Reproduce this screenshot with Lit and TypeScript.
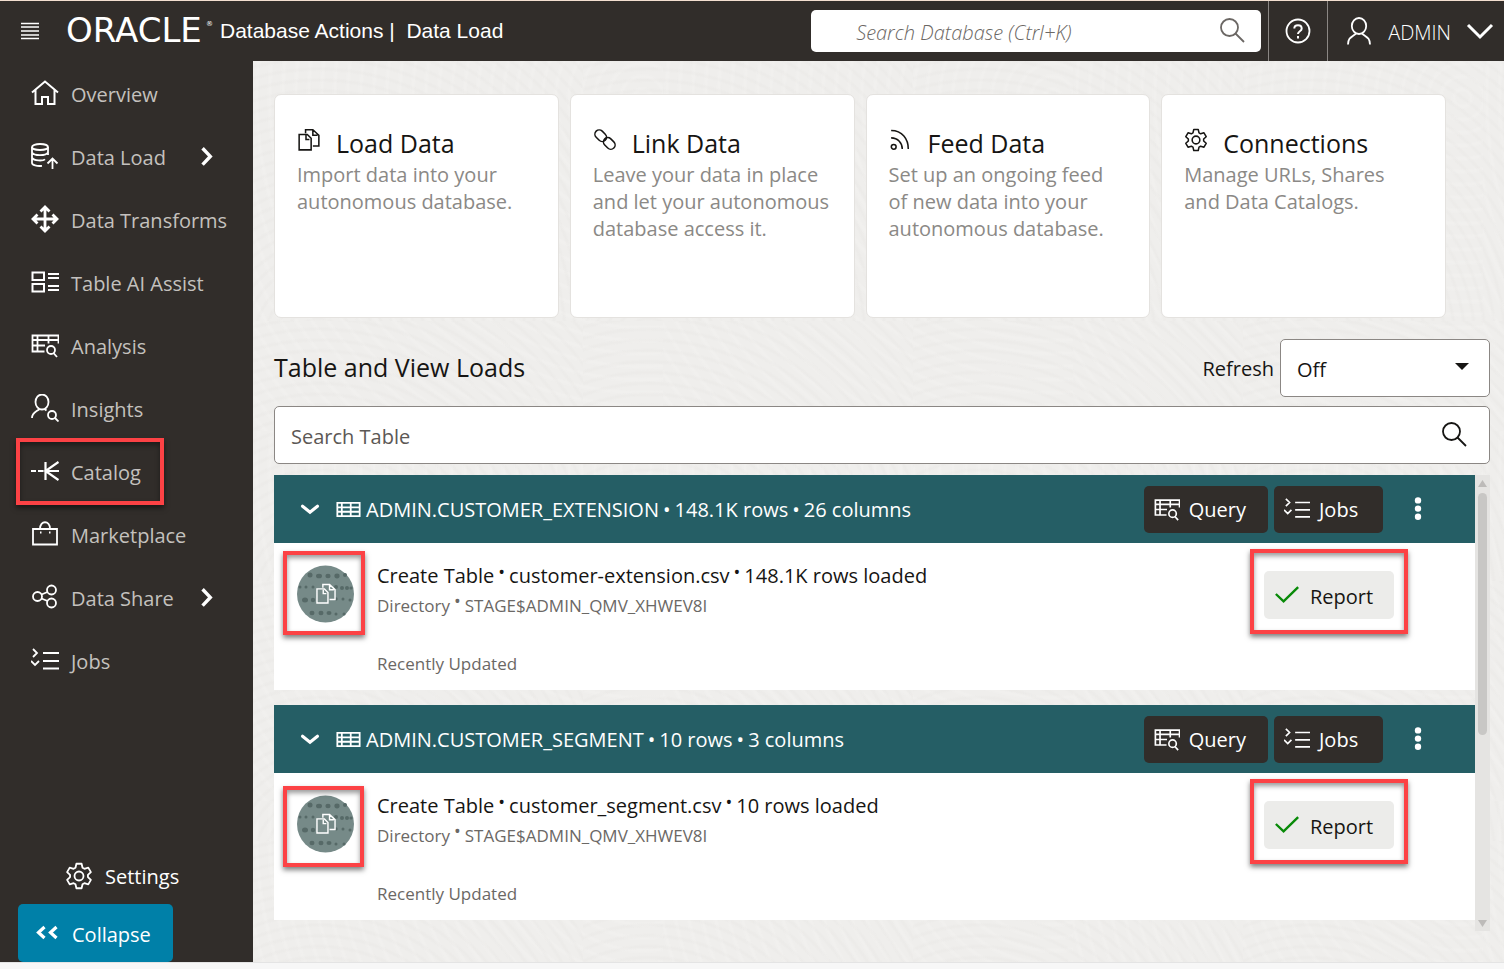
import { LitElement, html, svg, css, nothing } from "lit";
import type { SVGTemplateResult } from "lit";
import { customElement } from "lit/decorators.js";
import { classMap } from "lit/directives/class-map.js";

/** Outline of a gear with six teeth around (14, 14). */
function gearOutline(outer: number, inner: number): string {
  const points: string[] = [];
  const at = (radius: number, degrees: number) => {
    const a = (degrees * Math.PI) / 180;
    points.push(`${(14 + radius * Math.cos(a)).toFixed(2)} ${(14 + radius * Math.sin(a)).toFixed(2)}`);
  };
  for (let i = 0; i < 6; i++) {
    const mid = 90 + i * 60;
    at(inner, mid - 23);
    at(outer, mid - 12);
    at(outer, mid + 12);
    at(inner, mid + 23);
  }
  return `M${points.join("L")}Z`;
}

const GEAR = gearOutline(12.5, 9);

const ICONS: Record<string, SVGTemplateResult> = {
  menu: svg`<path d="M5 6.500h18M5 10h18M5 14h18M5 18h18M5 21.500h18" stroke-width="1.300"/>`,
  home: svg`<path d="M1 13.500 14 2.500l13 11M4.500 11v14H11v-7h6v7h6.500V11" stroke-width="2"/>`,
  load: svg`<ellipse cx="9" cy="5" rx="8" ry="3"/><path d="M1 5v16c0 2 5 3.500 10 2.800M17 5v8M1 10.500c2 3.500 14 3.500 16 0M1 15.800c2 3.300 11 3.300 13 1.500M21.500 27V17M16.500 21.500l5-5 5 5"/>`,
  transforms: svg`<path stroke-width="2.800" d="M14 3v22M3 14h22M9.500 6.500L14 2l4.500 4.500M9.500 21.500L14 26l4.500-4.500M6.500 9.500L2 14l4.500 4.500M21.500 9.500L26 14l-4.500 4.500"/>`,
  assist: svg`<path stroke-width="2" d="M1.500 4.500H13V12H1.500zM1.500 16H13v7.500H1.500zM17 6h11M17 10h11M17 18h11M17 22h11"/>`,
  analysis: svg`<path d="M13.500 20.500H1.500V4.500h26v8M1.500 9h26M6.500 4.500v16M17.500 4.500v8M1.500 14.500H14"/><circle cx="20" cy="19" r="4"/><path d="M22.500 22l3.500 4"/>`,
  insights: svg`<ellipse cx="11" cy="8" rx="6.500" ry="7.500"/><path d="M1 24C1 18.500 5 18 8.500 15M13.500 15l2 1.500"/><circle cx="21" cy="21" r="4"/><path d="M24 24l3.500 3.500"/>`,
  catalog: svg`<path stroke-width="2.200" d="M0 14h5M7 14h5.500M14.500 5v18M14.500 14H28M27.500 5l-13 9 13 9"/>`,
  market: svg`<path d="M2 9h24v15.500H2zM9 9c0-9 10-9 10 0"/><path d="M9 12.500h1.500M18 12.500h1.500" stroke-width="2"/>`,
  share: svg`<circle cx="6.500" cy="13.500" r="4.500"/><circle cx="20.500" cy="7" r="4.500"/><circle cx="20.500" cy="20" r="4.500"/><path d="M10.500 11.500l6-2.500M10.500 15.500l6 2.500"/>`,
  jobs: svg`<path d="M12 7h16M12 15h16M12 22.500h16M2 3l4 4-4 4M0 15l4 4 4-4"/>`,
  gear: svg`<path stroke-linejoin="round" d=${GEAR}/><circle cx="14" cy="14" r="4.500"/>`,
  copy: svg`<path d="M2.500 7.500H12l4.500 4.500v13.500H2.500zM10.500 8.500v5h4M10 6V2h8.500l7 6.500V21H18.500M18.500 3v5.500h5.500"/>`,
  link: svg`<rect x="1.500" y="4" width="15" height="10" rx="5" transform="rotate(45 9 9)"/><rect x="11.500" y="13" width="15" height="10" rx="5" transform="rotate(45 19 18)"/>`,
  feed: svg`<circle cx="5.500" cy="22" r="2.800"/><path d="M2.500 11.500c8 0 13 6 13 13M2.500 3c13 0 20 10 20 21.500"/>`,
  search: svg`<circle cx="11.500" cy="11.500" r="8.500"/><path d="M17.500 17.500l8.500 8.500"/>`,
  help: svg`<circle cx="14" cy="14" r="11.500"/><path d="M10.300 11.500c0-4.500 7.400-4.500 7.400 0 0 3-3.700 2.500-3.700 5.500M14 19v2.500" stroke-width="2"/>`,
  user: svg`<ellipse cx="14" cy="9" rx="7.200" ry="8"/><path d="M3 27.500c0-7 4-7.500 8-11M25 27.500c0-7-4-7.500-8-11"/>`,
  down: svg`<path d="M2 8l12 12 12-12" stroke-width="3"/>`,
  chevron: svg`<path d="M4.500 10.500L14 18l9.500-7.500" stroke-width="4" stroke-linecap="round"/>`,
  next: svg`<path d="M10 5l9 9.500-9 9.500" stroke-width="4"/>`,
  collapse: svg`<path d="M11.500 7l-6 5.500 6 5.500M23.500 7l-6 5.500 6 5.500" stroke-width="3.200"/>`,
  grid: svg`<path d="M1.500 6.500h25v15h-25zM1.500 11.500h25M1.500 16.500h25M6.500 6.500v15M16.500 6.500v15" stroke-width="2"/>`,
  check: svg`<path d="M1 14l9 8.500L27 6" stroke-width="2.800"/>`,
  dots: svg`<g fill="currentColor" stroke="none"><circle cx="14" cy="4" r="3.700"/><circle cx="14" cy="13.500" r="3.700"/><circle cx="14" cy="23" r="3.700"/></g>`,
};

const icon = (name: string, size = "") => html`
  <svg class="icon ${size}" viewBox="0 0 28 28" aria-hidden="true">${ICONS[name]}</svg>
`;

interface NavItem { icon: string; label: string; more?: boolean; marked?: boolean; }
interface Card { icon: string; title: string; lines: string[]; }
interface Load { table: string; rows: string; columns: string; file: string; low?: boolean; }

const NAV: NavItem[] = [
  { icon: "home", label: "Overview" },
  { icon: "load", label: "Data Load", more: true },
  { icon: "transforms", label: "Data Transforms" },
  { icon: "assist", label: "Table AI Assist" },
  { icon: "analysis", label: "Analysis" },
  { icon: "insights", label: "Insights" },
  { icon: "catalog", label: "Catalog", marked: true },
  { icon: "market", label: "Marketplace" },
  { icon: "share", label: "Data Share", more: true },
  { icon: "jobs", label: "Jobs" },
];

const CARDS: Card[] = [
  { icon: "copy", title: "Load Data", lines: ["Import data into your", "autonomous database."] },
  { icon: "link", title: "Link Data", lines: ["Leave your data in place", "and let your autonomous", "database access it."] },
  { icon: "feed", title: "Feed Data", lines: ["Set up an ongoing feed", "of new data into your", "autonomous database."] },
  { icon: "gear", title: "Connections", lines: ["Manage URLs, Shares", "and Data Catalogs."] },
];

const LOADS: Load[] = [
  { table: "ADMIN.CUSTOMER_EXTENSION", rows: "148.1K", columns: "26", file: "customer-extension.csv" },
  { table: "ADMIN.CUSTOMER_SEGMENT", rows: "10", columns: "3", file: "customer_segment.csv", low: true },
];

@customElement("app-root")
export class AppRoot extends LitElement {
  static styles = css`
    :host {
      display: grid;
      grid-template: auto 1fr auto / 253px 1fr;
      min-height: 100vh;
      box-sizing: border-box;
      background: #efeeec;
      color: #161513;
      font: 20px/27px "Open Sans", "Noto Sans", sans-serif;
    }
    *, *::before, *::after { box-sizing: border-box; }
    h1, h2, h3, p, ul { margin: 0; padding: 0; font-weight: 400; }
    ul { list-style: none; }
    a { color: inherit; text-decoration: none; }
    button, input, select { font: inherit; color: inherit; margin: 0; border: 0; background: none; padding: 0; }
    .icon { width: 28px; height: 28px; flex: none; display: block; fill: none; stroke: currentColor; stroke-width: 1.8; }
    .icon.s { width: 22px; height: 22px; }
    .icon.m { width: 24px; height: 24px; }

    .top {
      grid-column: 1 / -1;
      display: flex;
      align-items: center;
      height: 61px;
      border-top: 1px solid #f3dfd0;
      background: #312d2a;
      color: #fff;
    }
    .menu { margin: 0 19px 0 16px; }
    .logo { width: 157px; height: 60px; flex: none; fill: #fff; font-family: "DejaVu Sans", sans-serif; font-size: 34px; }
    .logo .reg { font-size: 7px; }
    .product { font: 21px/30px "Liberation Sans", Arial, sans-serif; white-space: pre; flex: 1; }
    .find { display: flex; align-items: center; width: 450px; height: 42px; margin-right: 7px; padding: 2px 15px 0 45px; border-radius: 5px; background: #fff; color: #6b6764; }
    .find input { flex: 1; min-width: 0; font-style: italic; font-weight: 300; outline: 0; }
    .find .icon { margin-bottom: 4px; }
    input::placeholder { color: inherit; opacity: 1; }
    .help, .user { display: flex; align-items: center; align-self: stretch; border-left: 1px solid #8b8784; }
    .help { justify-content: center; width: 59px; }
    .user { gap: 15px; padding: 2px 10px 0 17px; font-weight: 300; }
    .user .icon { margin-bottom: 2px; }

    .side { display: flex; flex-direction: column; background: #312d2a; color: #fff; padding-top: 2px; }
    .nav a { position: relative; display: flex; align-items: center; gap: 12px; height: 63px; padding-left: 31px; color: #c4c1be; }
    .nav a > .icon { color: #fff; margin-bottom: 4px; }
    .nav .label { white-space: nowrap; }
    .nav .more { position: absolute; left: 194px; top: 18px; }
    .settings { display: flex; align-items: center; gap: 12px; margin-top: auto; padding: 14px 0 14px 65px; }
    .collapse { display: flex; align-items: center; gap: 11px; width: 155px; height: 58px; margin-left: 18px; padding: 2px 0 0 15px; border-radius: 5px; background: #0080a8; }

    .mark { position: absolute; border: 4px solid #fc4245; box-shadow: 0 3px 5px rgba(0,0,0,.5), inset 0 3px 5px rgba(0,0,0,.4); pointer-events: none; }
    .mark.item { left: 16px; width: 148px; top: -3px; bottom: -1px; }
    .mark.round { inset: -14px -11px -12px -14px; }
    .mark.round.low { inset: -9px -10px -14px -14px; }
    .mark.report { inset: -22px -14px -15px -14px; }

    .main {
      min-width: 0;
      padding: 33px 14px 30px 21px;
      background-image:
        repeating-radial-gradient(ellipse at 20% 110%, transparent 0 4px, rgba(90,80,70,.015) 6px 7px, transparent 9px 10px),
        repeating-radial-gradient(circle at 95% 10%, transparent 0 6px, rgba(255,255,255,.12) 8px 9px, transparent 12px 13px);
      background-size: 330px 260px, 410px 370px;
    }
    .cards { display: grid; grid-template-columns: repeat(4, 1fr); gap: 11px; margin-right: 44px; }
    .card { min-height: 224px; padding: 31px 10px 20px 22px; border: 1px solid #e4e2df; border-radius: 7px; background: #fff; color: #8b8986; white-space: nowrap; }
    .card h2 { display: flex; align-items: center; gap: 15px; margin-bottom: 1px; font-size: 25px; line-height: 34px; color: #161513; }
    .card h2 .icon { margin-bottom: 6px; }
    .bar { display: flex; align-items: center; margin: 21px 0 9px; }
    .bar h1 { flex: 1; font-size: 25px; line-height: 34px; padding-bottom: 2px; }
    .field { position: relative; margin-left: 6px; }
    .field select { appearance: none; display: block; width: 210px; height: 58px; padding: 2px 40px 0 16px; border: 1px solid #8b8784; border-radius: 5px; background: #fff; }
    .caret { position: absolute; right: 20px; top: 23px; width: 16px; height: 9px; fill: #161513; }
    .search { display: flex; align-items: center; height: 58px; padding: 0 21px 0 16px; border: 1px solid #8b8784; border-radius: 5px; background: #fff; color: #5c5855; }
    .search input { flex: 1; min-width: 0; height: 54px; padding-top: 2px; outline: 0; }
    .search .icon { color: #161513; margin-bottom: 2px; }

    .results { display: flex; margin-top: 11px; }
    .list { flex: 1; min-width: 0; display: grid; gap: 15px; padding-bottom: 11px; }
    .scroll { display: flex; flex-direction: column; align-items: center; width: 15px; background: #e5e4e2; }
    .scroll svg { width: 9px; height: 18px; fill: #bdbbb9; }
    .thumb { width: 9px; height: 242px; margin-bottom: auto; border-radius: 5px; background: #c8c7c5; }
    .load { background: #fff; }
    .head { display: flex; align-items: center; height: 68px; padding-right: 45px; background: #255e65; color: #fff; }
    .head h3 { flex: 1; display: flex; align-items: center; gap: 5px; font-size: 20px; line-height: 27px; white-space: nowrap; }
    .head h3 .icon { width: 25px; height: 25px; }
    .sep { margin: 0 4px; }
    .toggle { margin: 0 15px 0 25px; }
    .dark { display: flex; align-items: center; gap: 9px; height: 47px; min-width: 109px; margin-right: 6px; padding: 0 22px 0 10px; border-radius: 5px; background: #312d2a; }
    .dark .icon { width: 26px; height: 26px; }
    .dots { margin-left: 17px; }
    .body { display: flex; align-items: flex-start; min-height: 147px; padding: 22px 81px 0 23px; }
    .avatar { position: relative; display: grid; place-items: center; width: 57px; height: 58px; margin-right: 23px; color: #fff; }
    .avatar .icon { position: relative; }
    .avatar .disc { position: absolute; inset: 0; width: 57px; height: 58px; }
    .info { flex: 1; margin-top: -3px; white-space: nowrap; }
    .small { font-size: 17px; line-height: 24px; color: #6b6865; }
    .info .place { margin-top: 4px; margin-bottom: 34px; }
    .dot { margin: 0 4px; vertical-align: 4px; font-size: 18px; line-height: 16px; }
    .body .frame { position: relative; margin-top: 6px; }
    .result { display: flex; align-items: center; gap: 11px; width: 130px; height: 48px; padding: 2px 0 0 11px; border-radius: 5px; background: #ececea; }
    .result .icon { color: #088a08; margin-bottom: 4px; }
    .foot { grid-column: 1 / -1; height: 7px; border-top: 1px solid #e4e4e4; background: #f7f7f7; }
  `;

  private disc() {
    return html`
      <svg class="disc" viewBox="0 0 57 58" aria-hidden="true">
        <circle cx="28.500" cy="29" r="28.500" fill="#768a88"/>
        <g fill="#566967">
          <circle cx="13" cy="10" r="2.500"/><ellipse cx="22" cy="11" rx="3" ry="2.300"/><ellipse cx="31" cy="11" rx="2.600" ry="2.200"/><ellipse cx="40" cy="11" rx="2.600" ry="2.400"/><circle cx="48" cy="10" r="2"/>
          <circle cx="3" cy="22" r="1.500"/><circle cx="9" cy="22" r="1.500"/><circle cx="16" cy="22" r="1.500"/><circle cx="39" cy="22" r="2"/><circle cx="45" cy="23" r="2"/><circle cx="50" cy="23" r="2"/><circle cx="54" cy="23" r="1.600"/>
          <ellipse cx="8" cy="35" rx="3" ry="2.500"/><circle cx="16" cy="35" r="2.200"/><circle cx="39" cy="34" r="1.700"/><circle cx="46" cy="34" r="1.500"/><circle cx="53" cy="35" r="1.500"/>
          <ellipse cx="15" cy="48" rx="2.500" ry="2.200"/><ellipse cx="24" cy="48" rx="2.500" ry="2.200"/><ellipse cx="32" cy="48" rx="2.500" ry="2"/><circle cx="39" cy="49" r="1.500"/><circle cx="47" cy="49" r="1.500"/>
        </g>
      </svg>
    `;
  }

  private load(item: Load) {
    const dot = html`<span class="dot">•</span>`;
    const sep = html`<span class="sep">•</span>`;
    return html`
      <article class="load">
        <header class="head">
          <button class="toggle" aria-label="Toggle ${item.table}">${icon("chevron", "s")}</button>
          <h3>${icon("grid")}<span>${item.table}${sep}${item.rows} rows${sep}${item.columns} columns</span></h3>
          <button class="dark">${icon("analysis")}Query</button>
          <button class="dark">${icon("jobs")}Jobs</button>
          <button class="dots" aria-label="More actions">${icon("dots", "m")}</button>
        </header>
        <div class="body">
          <div class="avatar">
            ${this.disc()}${icon("copy", "s")}
            <span class=${classMap({ mark: true, round: true, low: !!item.low })}></span>
          </div>
          <div class="info">
            <p>Create Table${dot}${item.file}${dot}${item.rows} rows loaded</p>
            <p class="small place">Directory${dot}STAGE$ADMIN_QMV_XHWEV8I</p>
            <p class="small">Recently Updated</p>
          </div>
          <div class="frame">
            <button class="result">${icon("check", "m")}Report</button>
            <span class="mark report"></span>
          </div>
        </div>
      </article>
    `;
  }

  render() {
    return html`
      <header class="top">
        <button class="menu" aria-label="Menu">${icon("menu")}</button>
        <svg class="logo" viewBox="0 0 157 60" role="img" aria-label="Oracle">
          <text x="3" y="41">ORACLE</text><text class="reg" x="143" y="25">®</text>
        </svg>
        <div class="product">Database Actions |  Data Load</div>
        <label class="find">
          <input type="text" aria-label="Search Database" placeholder="Search Database (Ctrl+K)" />
          ${icon("search")}
        </label>
        <button class="help" aria-label="Help">${icon("help")}</button>
        <button class="user">${icon("user")}<span>ADMIN</span>${icon("down")}</button>
      </header>

      <aside class="side">
        <nav class="nav">
          <ul>
            ${NAV.map((n) => html`
              <li>
                <a href="#">
                  ${icon(n.icon)}<span class="label">${n.label}</span>
                  ${n.more ? icon("next", "m more") : nothing}
                  ${n.marked ? html`<span class="mark item"></span>` : nothing}
                </a>
              </li>
            `)}
          </ul>
        </nav>
        <button class="settings">${icon("gear")}Settings</button>
        <button class="collapse">${icon("collapse")}Collapse</button>
      </aside>

      <main class="main">
        <section class="cards">
          ${CARDS.map((c) => html`
            <article class="card">
              <h2>${icon(c.icon, "m")}${c.title}</h2>
              ${c.lines.map((line) => html`<p>${line}</p>`)}
            </article>
          `)}
        </section>
        <div class="bar">
          <h1>Table and View Loads</h1>
          <label for="refresh">Refresh</label>
          <div class="field">
            <select id="refresh"><option>Off</option></select>
            <svg class="caret" viewBox="0 0 16 9" aria-hidden="true"><path d="M1 1h14L8 8z"/></svg>
          </div>
        </div>
        <label class="search">
          <input type="text" aria-label="Search Table" placeholder="Search Table" />
          ${icon("search")}
        </label>
        <section class="results">
          <div class="list">${LOADS.map((l) => this.load(l))}</div>
          <div class="scroll" aria-hidden="true">
            <svg viewBox="0 0 9 18"><path d="M0 12l4.500-7L9 12z"/></svg>
            <div class="thumb"></div>
            <svg viewBox="0 0 9 18"><path d="M0 7l4.500 7L9 7z"/></svg>
          </div>
        </section>
      </main>
      <footer class="foot"></footer>
    `;
  }
}
